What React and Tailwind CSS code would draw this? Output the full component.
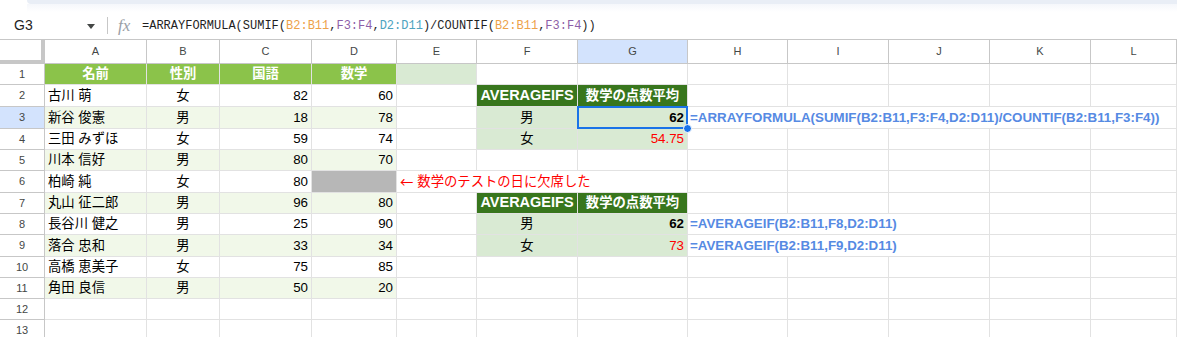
import React from 'react';

const cols = 'grid grid-cols-[45px_102px_73px_92px_85px_80px_101px_110px_100px_101px_101px_101px_86px]';
const letters = ['A', 'B', 'C', 'D', 'E', 'F', 'G', 'H', 'I', 'J', 'K', 'L'];

const students = [
  ['古川 萌', '女', 82, 60],
  ['新谷 俊憲', '男', 18, 78],
  ['三田 みずほ', '女', 59, 74],
  ['川本 信好', '男', 80, 70],
  ['柏崎 純', '女', 80, null],
  ['丸山 征二郎', '男', 96, 80],
  ['長谷川 健之', '男', 25, 90],
  ['落合 忠和', '男', 33, 34],
  ['高橋 恵美子', '女', 75, 85],
  ['角田 良信', '男', 50, 20],
];

const heights = ['h-[21px]', 'h-[22px]', 'h-[22px]', 'h-[21px]', 'h-[21px]', 'h-[22px]', 'h-[21px]', 'h-[21px]', 'h-[22px]', 'h-[21px]', 'h-[21px]', 'h-[21px]', 'h-[21px]'];

const Cell = ({ children, className = '' }) => (
  <div className={`border-r border-b border-[#e2e2e2] px-[3px] flex items-center whitespace-nowrap overflow-hidden ${className}`}>
    {children}
  </div>
);

const Row = ({ n, children }) => (
  <div className={`${cols} ${heights[n - 1]}`}>
    <div className={`border-r border-b border-[#c7c7c7] flex items-center justify-center text-[11px] text-[#444746] ${n === 3 ? 'bg-[#d3e3fd]' : 'bg-white'}`}>
      {n}
    </div>
    {children}
  </div>
);

const Empty = ({ count }) => Array.from({ length: count }).map((_, i) => <Cell key={i} />);

const TableHead = () => (
  <>
    <Cell className="bg-[#38761d] text-white font-bold text-[14.5px] justify-center">AVERAGEIFS</Cell>
    <Cell className="bg-[#38761d] text-white font-bold justify-center">数学の点数平均</Cell>
  </>
);

const Formula = () => (
  <div className="flex items-center h-[28px] border-b border-[#c7c7c7]">
    <div className="w-[87px] pl-[14px] text-[14px] text-[#1f1f1f]">G3</div>
    <svg width="8" height="5" viewBox="0 0 8 5" className="mt-[1px]">
      <path d="M0 0h8L4 5z" fill="#444746" />
    </svg>
    <div className="w-px h-[17px] bg-[#c7c7c7] ml-[12px]" />
    <div className="ml-[10px] w-[24px] font-['Liberation_Serif',serif] italic text-[17px] text-[#9aa0a6] leading-none">fx</div>
    <div className="font-['Liberation_Mono',monospace] text-[12px] text-[#1f1f1f]">
      =ARRAYFORMULA(SUMIF(<span className="text-[#eda24a]">B2:B11</span>,<span className="text-[#8e5fa8]">F3:F4</span>,<span className="text-[#4ea3bf]">D2:D11</span>)/COUNTIF(<span className="text-[#eda24a]">B2:B11</span>,<span className="text-[#8e5fa8]">F3:F4</span>))
    </div>
  </div>
);

const App = () => {
  const band = (n) => (n % 2 === 1 ? 'bg-[#f1f8e9]' : 'bg-white');

  const extra = {
    2: (
      <>
        <Cell />
        <TableHead />
        <Empty count={5} />
      </>
    ),
    3: (
      <>
        <Cell />
        <Cell className="bg-[#d9ead3] justify-center">男</Cell>
        <Cell className="bg-[#d9ead3] justify-end font-bold relative overflow-visible z-10">
          62
          <div className="absolute -left-px -top-px -right-[1px] -bottom-[1px] border-2 border-[#1a73e8]" />
          <div className="absolute -right-[5px] -bottom-[5px] w-[9px] h-[9px] rounded-full bg-[#1a73e8] border border-white" />
        </Cell>
        <Cell className="col-span-5 font-bold text-[#568ae3] pl-[2px] text-[13.33px]">
          =ARRAYFORMULA(SUMIF(B2:B11,F3:F4,D2:D11)/COUNTIF(B2:B11,F3:F4))
        </Cell>
      </>
    ),
    4: (
      <>
        <Cell />
        <Cell className="bg-[#d9ead3] justify-center">女</Cell>
        <Cell className="bg-[#d9ead3] justify-end text-[#ff0000]">54.75</Cell>
        <Empty count={5} />
      </>
    ),
    6: (
      <>
        <Cell className="col-span-3 text-[#ff0000]">
          <span className="font-['Noto_Sans_CJK_JP',sans-serif] mr-[4px]">←</span>数学のテストの日に欠席した
        </Cell>
        <Empty count={5} />
      </>
    ),
    7: (
      <>
        <Cell />
        <TableHead />
        <Empty count={5} />
      </>
    ),
    8: (
      <>
        <Cell />
        <Cell className="bg-[#d9ead3] justify-center">男</Cell>
        <Cell className="bg-[#d9ead3] justify-end font-bold">62</Cell>
        <Cell className="col-span-3 font-bold text-[#568ae3] pl-[2px] text-[13.33px]">=AVERAGEIF(B2:B11,F8,D2:D11)</Cell>
        <Empty count={2} />
      </>
    ),
    9: (
      <>
        <Cell />
        <Cell className="bg-[#d9ead3] justify-center">女</Cell>
        <Cell className="bg-[#d9ead3] justify-end text-[#ff0000]">73</Cell>
        <Cell className="col-span-3 font-bold text-[#568ae3] pl-[2px] text-[13.33px]">=AVERAGEIF(B2:B11,F9,D2:D11)</Cell>
        <Empty count={2} />
      </>
    ),
  };

  return (
    <div className="w-[1177px] h-[337px] overflow-hidden bg-white text-[13.33px] text-black font-['Liberation_Sans','Noto_Sans_CJK_JP',sans-serif]">
      <div className="h-[12px] flex">
        <div className="w-[27px]" />
        <div className="flex-1 flex flex-col">
          <div className="h-[4px] bg-[#e9eef6] rounded-bl-[6px]" />
          <div className="flex-1 bg-gradient-to-b from-[#f5f7fb] to-white" />
        </div>
      </div>
      <Formula />

      <div className={`${cols} h-[24px]`}>
        <div className="border-r-4 border-b-4 border-[#c7c7c7] bg-white" />
        {letters.map((l) => (
          <div
            key={l}
            className={`border-r border-b border-[#c7c7c7] flex items-center justify-center text-[11px] text-[#444746] ${l === 'G' ? 'bg-[#d3e3fd]' : 'bg-white'}`}
          >
            {l}
          </div>
        ))}
      </div>

      <Row n={1}>
        {['名前', '性別', '国語', '数学'].map((h) => (
          <Cell key={h} className="bg-[#8bc34a] text-white font-bold justify-center">{h}</Cell>
        ))}
        <Cell className="bg-[#d9ead3]" />
        <Empty count={7} />
      </Row>

      {students.map(([name, sex, jp, math], i) => {
        const n = i + 2;
        return (
          <Row key={n} n={n}>
            <Cell className={band(n)}>{name}</Cell>
            <Cell className={`${band(n)} justify-center`}>{sex}</Cell>
            <Cell className={`${band(n)} justify-end`}>{jp}</Cell>
            <Cell className={`${math === null ? 'bg-[#b7b7b7]' : band(n)} justify-end`}>{math}</Cell>
            {extra[n] || <Empty count={8} />}
          </Row>
        );
      })}

      <Row n={12}>
        <Empty count={12} />
      </Row>
      <Row n={13}>
        <Empty count={12} />
      </Row>
    </div>
  );
};

export default App;
